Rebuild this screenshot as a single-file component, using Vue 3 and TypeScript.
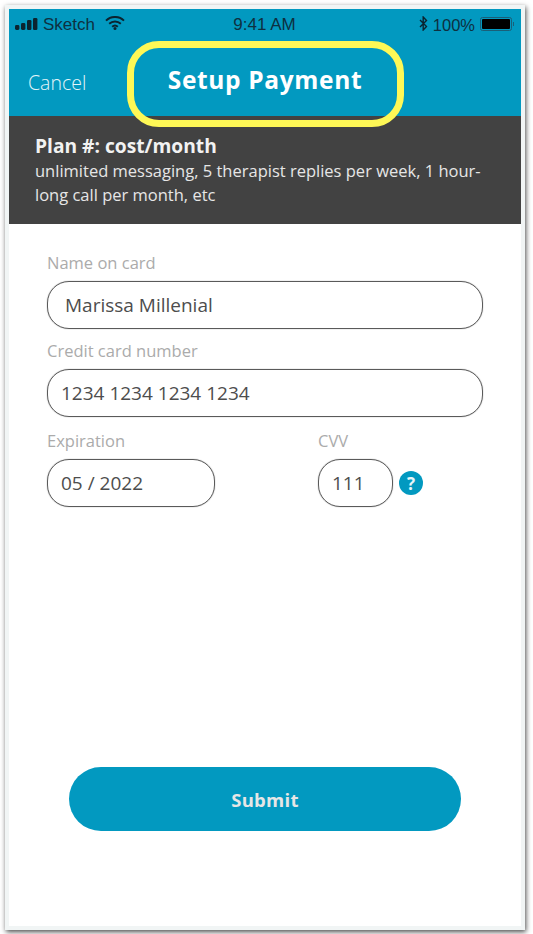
<script setup lang="ts">
const plan = 'unlimited messaging, 5 therapist replies per week, 1 hour-long call per month, etc'
</script>

<template>
  <div class="page">
    <div class="frame">
      <div class="screen">
        <header class="top">
          <div class="status">
            <div class="status-left">
              <svg class="signal" width="23" height="12" viewBox="0 0 23 12" aria-hidden="true">
                <rect x="0" y="7" width="4.4" height="5" rx="1.4" />
                <rect x="6" y="5" width="4.4" height="7" rx="1.4" />
                <rect x="12" y="2" width="4.4" height="10" rx="1.2" />
                <rect x="18" y="0" width="4.4" height="12" rx="1.2" />
              </svg>
              <span class="carrier">Sketch</span>
              <svg class="wifi" width="20" height="14" viewBox="0 0 20 14" aria-hidden="true">
                <path d="M1 4.6a13 13 0 0 1 18 0" />
                <path d="M4.2 7.8a8.6 8.6 0 0 1 11.6 0" />
                <path d="M7.2 10.7a4.2 4.2 0 0 1 5.6 0" />
                <circle cx="10" cy="12.4" r="1.5" />
              </svg>
            </div>
            <span class="time">9:41 AM</span>
            <div class="status-right">
              <svg class="bt" width="9" height="15" viewBox="0 0 9 15" aria-hidden="true">
                <path d="M1 4l6.5 6.5L4.2 14V1l3.3 3.5L1 11" />
              </svg>
              <span class="pct">100%</span>
              <div class="battery"><div class="battery-fill"></div></div>
              <div class="battery-tip"></div>
            </div>
          </div>
          <nav class="nav">
            <span class="cancel">Cancel</span>
            <h1 class="title">Setup Payment</h1>
          </nav>
        </header>

        <section class="plan">
          <h2 class="plan-title">Plan #: cost/month</h2>
          <p class="plan-text">{{ plan }}</p>
        </section>

        <main class="form">
          <div class="field">
            <label class="label">Name on card</label>
            <div class="input name-input">Marissa Millenial</div>
          </div>
          <div class="field">
            <label class="label">Credit card number</label>
            <div class="input">1234 1234 1234 1234</div>
          </div>
          <div class="row">
            <div class="field exp">
              <label class="label">Expiration</label>
              <div class="input">05 / 2022</div>
            </div>
            <div class="field cvv">
              <label class="label">CVV</label>
              <div class="cvv-row">
                <div class="input cvv-input">111</div>
                <span class="help">?</span>
              </div>
            </div>
          </div>
        </main>

        <div class="actions">
          <button class="submit" type="button">Submit</button>
        </div>

        <div class="highlight" aria-hidden="true"></div>
      </div>
    </div>
  </div>
</template>

<style>
html, body { margin: 0; padding: 0; background: #ffffff; }
</style>

<style scoped>
.page {
  width: 533px;
  height: 934px;
  box-sizing: border-box;
  padding: 5px 8px 4px 5px;
  background: #fff;
  overflow: hidden;
  font-family: "Open Sans", sans-serif;
}
.frame {
  height: 925px;
  box-sizing: border-box;
  padding: 4px;
  background: #f1f5f5;
  box-shadow: 1px 2px 5px rgba(0, 0, 0, 0.7);
}
.screen {
  position: relative;
  height: 917px;
  background: #fff;
  display: flex;
  flex-direction: column;
}
.top {
  height: 107px;
  background: #0299c0;
  flex: none;
}
.status {
  height: 32px;
  display: grid;
  grid-template-columns: 1fr auto 1fr;
  align-items: center;
  padding: 0 7px 0 6px;
  color: #0e3040;
  font-family: "Liberation Sans", Arial, sans-serif;
  font-size: 17px;
}
.status-left, .status-right { display: flex; align-items: center; }
.status-right { justify-content: flex-end; }
.signal { fill: #0b2430; margin-right: 5px; margin-top: -3px; }
.wifi { margin-left: 10px; margin-top: -5px; }
.wifi path { fill: none; stroke: #0b2430; stroke-width: 2; }
.wifi circle { fill: #0b2430; }
.bt { margin-right: 5px; margin-top: -4px; }
.bt path { fill: none; stroke: #0b2430; stroke-width: 1.4; }
.pct { font-size: 16.5px; }
.battery {
  width: 32px;
  height: 14px;
  box-sizing: border-box;
  margin-left: 5px;
  border: 1px solid #1a5f78;
  border-radius: 2.5px;
  padding: 1px;
  margin-top: -3px;
}
.battery-fill { height: 100%; background: #000; border-radius: 1px; }
.battery-tip { width: 1px; height: 4px; margin-left: 1px; margin-top: -3px; background: #1a5f78; }
.nav {
  position: relative;
  height: 75px;
  display: flex;
  align-items: center;
  justify-content: center;
}
.cancel {
  position: absolute;
  left: 19px;
  top: 30px;
  font-size: 19.5px;
  line-height: 24px;
  font-weight: 300;
  color: #e4f5f9;
}
.title {
  margin: 3px 0 0 0;
  font-size: 24.5px;
  line-height: 32px;
  font-weight: 700;
  color: #fff;
  letter-spacing: 0.65px;
}
.plan {
  flex: none;
  height: 108px;
  box-sizing: border-box;
  padding: 17px 26px 0;
  background: #424242;
  color: #e6e6e6;
}
.plan-title {
  margin: 0;
  font-size: 19.2px;
  line-height: 26px;
  font-weight: 700;
  color: #f2f2f2;
}
.plan-text {
  margin: 0;
  font-size: 16.5px;
  line-height: 24px;
}
.form {
  flex: none;
  padding: 29px 38px 0;
  display: flex;
  flex-direction: column;
  gap: 12px;
}
.field { display: flex; flex-direction: column; }
.label {
  font-size: 16.5px;
  line-height: 20px;
  color: #ababab;
  margin-bottom: 8px;
}
.input {
  height: 48px;
  box-sizing: border-box;
  border: 1px solid #5a5a5a;
  box-shadow: 0 0 1px rgba(0, 0, 0, 0.55);
  border-radius: 22px;
  padding-left: 13px;
  display: flex;
  align-items: center;
  font-size: 19px;
  color: #4d4d4d;
}
.name-input { padding-left: 17px; }
.row { display: flex; gap: 103px; margin-top: 2px; }
.exp { width: 168px; }
.cvv { width: 110px; }
.cvv-row { display: flex; align-items: center; gap: 6px; }
.cvv-input { width: 75px; }
.help {
  width: 24px;
  height: 24px;
  border-radius: 50%;
  background: #0299c0;
  color: #e8f6fa;
  font-size: 17px;
  font-weight: 700;
  display: flex;
  align-items: center;
  justify-content: center;
}
.actions {
  margin-top: 260px;
  padding-left: 60px;
}
.submit {
  width: 392px;
  height: 64px;
  border: 0;
  border-radius: 32px;
  background: #0299c0;
  color: #e6e6e6;
  font-family: "Open Sans", sans-serif;
  font-size: 18.5px;
  font-weight: 700;
  letter-spacing: 0.3px;
}
.highlight {
  position: absolute;
  left: 118px;
  top: 32px;
  width: 277px;
  height: 86px;
  box-sizing: border-box;
  border: 7px solid #fef856;
  border-radius: 32px;
}
</style>
